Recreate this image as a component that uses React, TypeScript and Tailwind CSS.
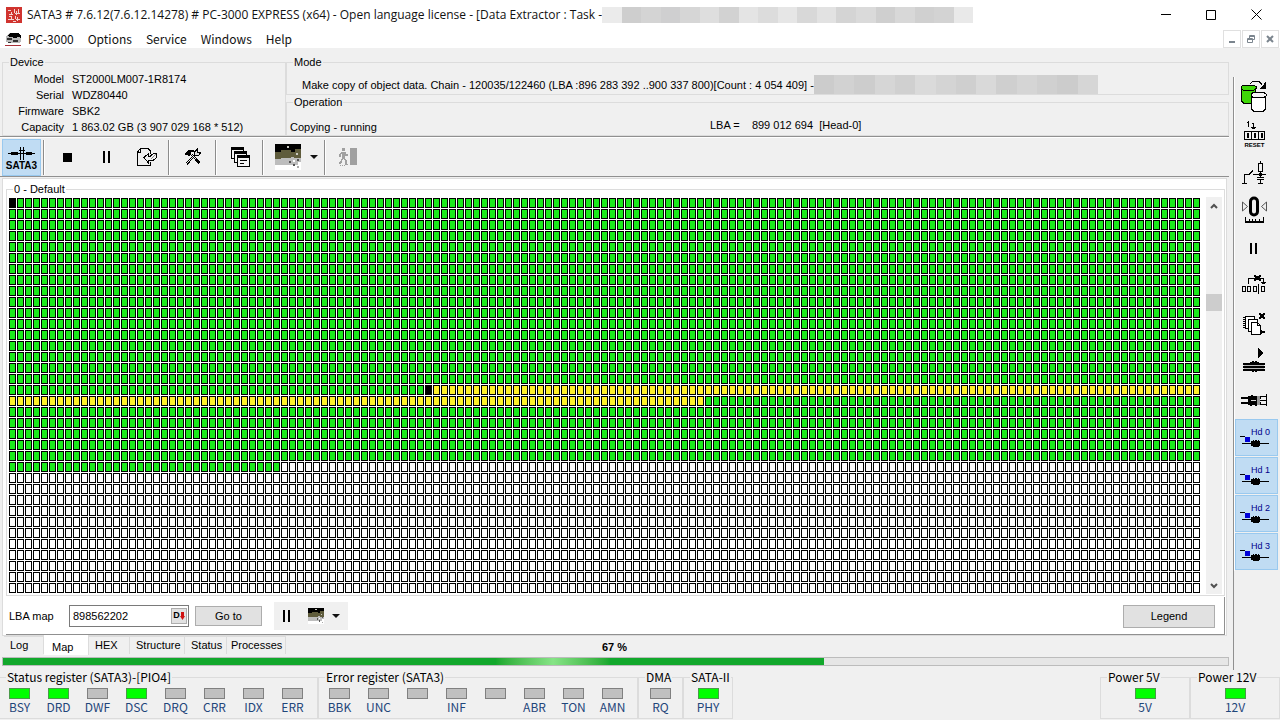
import { useState } from "react";
import type { ReactNode } from "react";
import clsx from "clsx";

const COLUMNS = 149;
const ROWS = 36;

type CellState = "done" | "active" | "marker" | "empty";

const CELL_STYLES: Record<CellState, string> = {
  done: "bg-[#1aea1a]",
  active: "bg-[#fff02a]",
  marker: "bg-black",
  empty: "bg-white",
};

const MARKER = 17 * COLUMNS + 52;
const ACTIVE_END = 18 * COLUMNS + 87;
const DONE_END = 24 * COLUMNS + 34;

function cellState(index: number): CellState {
  if (index === 0 || index === MARKER) return "marker";
  if (index > MARKER && index < ACTIVE_END) return "active";
  if (index < DONE_END) return "done";
  return "empty";
}

const CELLS = Array.from({ length: COLUMNS * ROWS }, (_, i) => cellState(i));

const DEVICE = [
  ["Model", "ST2000LM007-1R8174"],
  ["Serial", "WDZ80440"],
  ["Firmware", "SBK2"],
  ["Capacity", "1 863.02 GB (3 907 029 168 * 512)"],
];

const STATUS_REGISTER = [
  { label: "BSY", on: true },
  { label: "DRD", on: true },
  { label: "DWF", on: false },
  { label: "DSC", on: true },
  { label: "DRQ", on: false },
  { label: "CRR", on: false },
  { label: "IDX", on: false },
  { label: "ERR", on: false },
];

const ERROR_REGISTER = ["BBK", "UNC", "", "INF", "", "ABR", "TON", "AMN"].map((label) => ({
  label,
  on: false,
}));

const TABS = [
  { name: "Log", width: "w-10 pl-[6px]" },
  { name: "Map", width: "w-[45px] pl-[8px]" },
  { name: "HEX", width: "w-[41px] pl-[6px]" },
  { name: "Structure", width: "w-[55px] pl-[6px]" },
  { name: "Status", width: "w-[42px] pl-[6px]" },
  { name: "Processes", width: "w-[59px] pl-[4px]" },
];

function Group({ title, className, children }: { title: string; className?: string; children: ReactNode }) {
  return (
    <fieldset className={clsx("min-w-0 border border-[#dcdcdc]", className)}>
      <legend className="ml-[6px] h-[14px] px-px leading-[14px] whitespace-nowrap">{title}</legend>
      {children}
    </fieldset>
  );
}

function Mosaic({ colors, className }: { colors: string[]; className: string }) {
  return (
    <div className={clsx("flex", className)}>
      {colors.map((color, i) => (
        <div key={i} className={clsx("flex-1", color)} />
      ))}
    </div>
  );
}

function Led({ label, on }: { label: string; on: boolean }) {
  return (
    <div className="flex w-[39px] flex-col items-center">
      <div className={clsx("h-[11px] w-[21px] border", on ? "border-[#4a9a4a] bg-[#00ff00]" : "border-[#808080] bg-[#c0c0c0]")} />
      <span className="h-4 leading-4 text-[#1f467a]">{label}</span>
    </div>
  );
}

function Separator() {
  return <div className="h-[35px] w-[2px] border-r border-l border-r-white border-l-[#8c8c8c]" />;
}

function PauseIcon() {
  return (
    <svg width="10" height="12" viewBox="0 0 10 12" shapeRendering="crispEdges">
      <path d="M1 0h2v12H1zM6 0h2v12H6z" />
    </svg>
  );
}

function MapPicture({ size }: { size: number }) {
  return (
    <svg width={size} height={size} viewBox="0 0 26 26" shapeRendering="crispEdges">
      <rect width="26" height="26" fill="#fff" />
      <rect width="26" height="9" fill="#000" />
      <path d="M0 8h6V6h10v2h4V5h6v10H0z" fill="#5f5c3c" />
      <path d="M0 15h6v-1h10v-1h3v1h7v7H0z" fill="#bdbdbd" />
      <path d="M12 2h2v2h-2zM21 9h2v2h-2z" fill="#c8c8c0" />
      <path d="M14 17h2v2h-2zM18 20h2v2h-2zM22 15h2v2h-2z" fill="#555" />
      <path d="M23 18h3v3h-3zM18 16h2v2h-2z" fill="#fff" />
      <path d="M22 22h2v2h-2z" fill="#aaa" />
    </svg>
  );
}

function Caret() {
  return (
    <svg width="8" height="4" viewBox="0 0 8 4">
      <path d="M0 0h8L4 4z" fill="#111" />
    </svg>
  );
}

function SideSvg({ children }: { children: ReactNode }) {
  return (
    <svg width="38" height="38" viewBox="0 0 38 38" fill="none" stroke="#000" shapeRendering="crispEdges">
      {children}
    </svg>
  );
}

const SIDE_TOOLS: { name: string; icon: ReactNode }[] = [
  {
    name: "Copy drive",
    icon: (
      <>
        <path d="M6.500 10v14l2 2h10l2-2V10" fill="#3fd808" />
        <path d="M8 8.500h11l2 1v2l-2 1.500H8l-1.500-1.500v-2z" fill="#3fd808" />
        <path d="M16.500 18v14l2 2h10l2-2V18" fill="#fff" />
        <path d="M18 15.500h11l2 1.500v2l-2 1.500H18l-1.500-1.500v-2z" fill="#f4f4f4" />
        <path d="M15 6.500l3-2h6l3 3" />
        <path d="M31 4v8h-7l2-2 3-3z" fill="#000" stroke="none" />
      </>
    ),
  },
  {
    name: "Reset",
    icon: (
      <>
        <path d="M12 7.500h2M13.500 6v6M17 8.500h2M18.500 8v6M16 12.500h5M17 13.500h3" />
        <path d="M30 16.500H9.500v8H30M16.500 17v7M23.500 17v7M29.500 17v7" />
        <path d="M12.500 18.500h1v4h-1zM19.500 18.500h1v4h-1zM26.500 18.500h1v4h-1z" />
        <text x="19.500" y="32" textAnchor="middle" stroke="none" fill="#000" fontSize="6" fontWeight="700" fontFamily="Liberation Sans, sans-serif" shapeRendering="auto">
          RESET
        </text>
      </>
    ),
  },
  {
    name: "Power circuit",
    icon: (
      <>
        <path d="M25.500 8v2M23.500 10.500h4v8h-4zM25.500 18v6M18 21.500h13M22 24.500h7M22 26.500h7M25.500 27v4M23 30.500h5" />
        <path d="M24 20h3v3h-3z" fill="#000" stroke="none" />
        <path d="M7 30.500h5M9.500 30v-8.500H14l4-4" />
      </>
    ),
  },
  {
    name: "Recalibrate",
    icon: (
      <>
        <rect x="15.500" y="7" width="7" height="17" rx="3.500" strokeWidth="3" shapeRendering="auto" />
        <path d="M7.500 11v9l5-4.500zM31.500 11v9l-5-4.500z" stroke="#555" shapeRendering="auto" />
        <path d="M10 30.500h19M10 31.500h19M10.500 26v5M14.500 28v3M17.500 28v3M20.500 28v3M24.500 28v3M28.500 26v5" />
      </>
    ),
  },
  { name: "Pause", icon: <path d="M15 14h2v11h-2zM20 14h2v11h-2z" fill="#000" stroke="none" /> },
  {
    name: "Skip sectors",
    icon: (
      <>
        <path d="M7.500 19.500h3v5h-3zM12.500 19.500h3v5h-3zM18.500 19.500h3v5h-3zM23.500 17v10M26.500 19.500h3v5h-3zM13.500 17v-5.500h15V15M26 15.500h5M27 16.500h3" />
        <path d="M19 8h2v1h3V8h2v2h-1v2h1v2h-2v-1h-3v1h-2v-2h1v-2h-1z" fill="#000" stroke="none" />
      </>
    ),
  },
  {
    name: "Clear chain",
    icon: (
      <>
        <path d="M10.500 11.500h9v12h-9z" fill="#fff" />
        <path d="M8 12.500h2M8 14.500h2M8 16.500h2M8 18.500h2M8 20.500h2M8 22.500h2" />
        <path d="M13.500 14.500h9v12h-9z" fill="#fff" />
        <path d="M16.500 17.500h6l3 3v9h-9z" fill="#fff" />
        <path d="M22.500 17v3.500H26" />
        <path d="M25 25h2v1h3v2h-3v1h-2zM24 8h2v1h2V8h2v2h-1v2h1v2h-2v-1h-2v1h-2v-2h1v-2h-1z" fill="#000" stroke="none" />
      </>
    ),
  },
  {
    name: "Start heads",
    icon: (
      <>
        <path d="M23 5l6 5-6 5z" fill="#000" stroke="none" />
        <path d="M8 21h22M8 24h22M8 27h22" strokeWidth="2" />
        <path d="M15 19h2v-1h2v1h1v-1h2v1h2v9h-2v1h-2v-1h-1v1h-2v-1h-2z" fill="#000" stroke="none" />
        <path d="M9 22.500h20M9 25.500h20" stroke="#bbb" />
      </>
    ),
  },
  {
    name: "Park heads",
    icon: (
      <>
        <path d="M6 17h20M6 22h20" strokeWidth="2" />
        <path d="M13 15h3v-1h2v1h4v10h-2v-1h-3v1h-2v-1h-2z" fill="#000" stroke="none" />
        <path d="M22 15h3v9h-3z" fill="#999" stroke="none" />
        <path d="M16 19.500h5" stroke="#ddd" />
        <path d="M25 15.500h6M25 19.500h6M25 23.500h6M31.500 13v12" />
      </>
    ),
  },
];

function SideBar() {
  return (
    <aside className="mt-[29px] flex w-[47px] shrink-0 flex-col border-l border-[#909090]">
      {SIDE_TOOLS.map((tool) => (
        <button key={tool.name} type="button" aria-label={tool.name} className="h-[38px] border-l border-white">
          <SideSvg>{tool.icon}</SideSvg>
        </button>
      ))}
      {[0, 1, 2, 3].map((head) => (
        <div key={head} className="h-[38px] border-l border-white">
          <button type="button" className="relative h-[37px] w-[43px] border border-[#99c9ef] bg-[#c0dcf3]">
            <span className="absolute top-[6px] right-[7px] text-[9px] leading-3 text-[#00008b]">Hd {head}</span>
            <svg width="41" height="35" viewBox="1 1 41 35" shapeRendering="crispEdges">
              <path d="M5 17h5v1H5z" />
              <path d="M10 18h5v5h-5z" fill="#0000d8" />
              <path d="M7 24h27v1H7z" />
              <path d="M16 22h2v-1h1v1h1v-1h2v1h1v-1h1v1h1v5h-1v1h-6v-1h-2z" />
            </svg>
          </button>
        </div>
      ))}
    </aside>
  );
}

function TitleBar() {
  return (
    <header className="bg-white font-['Noto_Sans_CJK_KR',sans-serif] text-[12px] text-[#111]">
      <div className="flex h-[29px] items-center pl-[6px]">
        <svg width="16" height="16" viewBox="0 0 16 16" shapeRendering="crispEdges">
          <rect width="16" height="16" fill="#d0342f" />
          <path d="M2 3h3v1H2zM5 5h1v2H5zM3 7h4v1H3zM8 2h1v4H8zM10 4h1v4h-1zM12 2h1v5h-1zM9 6h5v1H9zM3 9h3v1H3zM5 10h1v3H5zM2 12h6v1H2zM9 9h1v3H9zM11 10h1v4h-1zM10 12h4v1h-4zM7 14h3v1H7z" fill="#f4d4d2" />
        </svg>
        <h1 className="ml-[5px] font-['Open_Sans',sans-serif] leading-4 whitespace-nowrap">
          SATA3 # 7.6.12(7.6.12.14278) # PC-3000 EXPRESS (x64) - Open language license - [Data Extractor : Task -
        </h1>
        <Mosaic
          className="h-4 w-[371px]"
          colors={[
            "bg-[#ebebeb]", "bg-[#cecece]", "bg-[#d4d4d4]", "bg-[#cfcfd0]", "bg-[#d6d6d6]", "bg-[#dedede]",
            "bg-[#d2d2d2]", "bg-[#e4e4e4]", "bg-[#dcdcdc]", "bg-[#e6e6e6]", "bg-[#d8d8d8]", "bg-[#e2e2e2]",
            "bg-[#d4d4d4]", "bg-[#dadada]", "bg-[#cfcfcf]", "bg-[#d8d8d8]", "bg-[#d0d0d0]", "bg-[#d3d3d3]", "bg-[#e9e9e9]",
          ]}
        />
        <div className="ml-auto flex">
          <button type="button" aria-label="Minimize" className="flex h-[28px] w-[46px] items-center justify-center">
            <svg width="11" height="11" viewBox="0 0 11 11"><path d="M0 5.500h10" stroke="#000" /></svg>
          </button>
          <button type="button" aria-label="Maximize" className="flex h-[28px] w-11 items-center justify-center">
            <svg width="10" height="10" viewBox="0 0 10 10"><path d="M.5.500h9v9h-9z" fill="none" stroke="#000" /></svg>
          </button>
          <button type="button" aria-label="Close" className="flex h-[28px] w-[47px] items-center justify-center">
            <svg width="11" height="11" viewBox="0 0 11 11"><path d="M.5.500l10 10M10.500.500l-10 10" stroke="#000" /></svg>
          </button>
        </div>
      </div>
      <div className="flex h-[19px] items-center pl-[5px]">
        <svg width="16" height="16" viewBox="0 0 16 16" shapeRendering="crispEdges">
          <path d="M1 5l4-3h8l3 2v6l-2 2H4l-3-1z" fill="#b8b8b8" />
          <path d="M5 2h8l3 2v3l-3-1-3 1-5-1-3-1z" />
          <path d="M2 7h5v2H2zM8 9h5v2H8zM3 11h3v1H3z" fill="#333" />
          <path d="M0 14h16v1H0z" fill="#a83038" />
        </svg>
        <nav className="ml-[7px] flex gap-[14px]">
          {["PC-3000", "Options", "Service", "Windows", "Help"].map((item) => (
            <button key={item} type="button" className="leading-4">
              {item}
            </button>
          ))}
        </nav>
        <div className="mr-px ml-auto flex gap-px">
          <button type="button" aria-label="Minimize window" className="flex h-[18px] w-[18px] items-center justify-center border border-[#e0e0e0]">
            <svg width="8" height="8" viewBox="0 0 8 8"><path d="M1 6h6v2H1z" fill="#7b858e" /></svg>
          </button>
          <button type="button" aria-label="Restore window" className="flex h-[18px] w-[18px] items-center justify-center border border-[#e0e0e0]">
            <svg width="8" height="8" viewBox="0 0 8 8" fill="none" stroke="#7b858e"><path d="M.5 3.500h5v4h-5zM0 4.500h6M2.500 3V.500h5v4H6M2 1.500h6" /></svg>
          </button>
          <button type="button" aria-label="Close window" className="flex h-[18px] w-[18px] items-center justify-center border border-[#e0e0e0]">
            <svg width="8" height="8" viewBox="0 0 8 8"><path d="M1 1l6 6M7 1L1 7" stroke="#7b858e" strokeWidth="2" /></svg>
          </button>
        </div>
      </div>
    </header>
  );
}

function InfoPanel() {
  return (
    <div className="flex pt-[7px] pl-[2px]">
      <Group title="Device" className="w-[284px] shrink-0">
        <dl className="grid grid-cols-[61px_1fr] gap-x-2 pt-[2px] leading-4">
          {DEVICE.map(([label, value]) => (
            <div key={label} className="contents">
              <dt className="text-right">{label}</dt>
              <dd className="whitespace-nowrap">{value}</dd>
            </div>
          ))}
        </dl>
      </Group>
      <div className="flex min-w-0 flex-1 flex-col">
        <Group title="Mode" className="h-10">
          <div className="flex items-center pl-[15px]">
            <span className="mt-[6px] leading-4 whitespace-nowrap">
              Make copy of object data. Chain - 120035/122460 (LBA :896 283 392 ..900 337 800)[Count : 4 054 409] -
            </span>
            <Mosaic
              className="mt-[6px] h-[19px] w-[284px]"
              colors={[
                "bg-[#cccccc]", "bg-[#d2d2d2]", "bg-[#cdcdcd]", "bg-[#d6d6d6]", "bg-[#d0d0d0]", "bg-[#dadada]", "bg-[#d4d4d4]",
                "bg-[#cfcfcf]", "bg-[#d9d9d9]", "bg-[#cfcfcf]", "bg-[#d5d5d5]", "bg-[#d0d0d0]", "bg-[#cccccc]", "bg-[#d6d6d6]",
              ]}
            />
          </div>
        </Group>
        <Group title="Operation" className="flex-1">
          <div className="grid grid-cols-[420px_1fr] pt-[8px] pl-[3px] leading-4">
            <span className="pt-[2px]">Copying - running</span>
            <span className="whitespace-pre">LBA =    899 012 694  [Head-0]</span>
          </div>
        </Group>
      </div>
    </div>
  );
}

function ToolBar() {
  return (
    <div className="border-t border-[#909090]">
      <div className="flex h-10 items-center border-t border-b border-t-white border-b-[#909090] pl-[2px]">
        <button type="button" className="flex h-[37px] w-[39px] flex-col items-center border border-[#99c9ef] bg-[#c0dcf3] pt-[7px]">
          <svg width="27" height="13" viewBox="0 0 27 13" className="shrink-0" shapeRendering="crispEdges">
            <path d="M0 6h27v1H0zM3 5h7v3H3zM18 5h6v3h-6zM12 0h1v13h-1zM15 0h1v13h-1zM11 3h6v1h-6z" />
          </svg>
          <span className="text-[10px] leading-3 font-bold">SATA3</span>
        </button>
        <div className="ml-[2px] flex items-center">
          <Separator />
          <button type="button" aria-label="Stop" className="flex h-9 w-11 items-center justify-center">
            <span className="h-[9px] w-[9px] bg-black" />
          </button>
          <button type="button" aria-label="Pause" className="flex h-9 w-[35px] items-center justify-center">
            <PauseIcon />
          </button>
          <button type="button" aria-label="Export" className="flex h-9 w-11 items-center justify-center pl-[2px]">
            <svg width="22" height="20" viewBox="0 0 22 20" fill="none" stroke="#000" shapeRendering="crispEdges">
              <path d="M14.500 7V4l-2.500-2.500H4.500L1.500 5v13.500h13V15M4.500 2v3H2" />
              <path d="M8 10.500L12.500 6.500V9h2l3-2.500h3v4L17 13.500h-4.500V16z" fill="#f0f0f0" />
              <path d="M15 12l5-5" stroke="#888" />
            </svg>
          </button>
          <Separator />
          <button type="button" aria-label="Tools" className="flex h-9 w-[45px] items-center justify-center">
            <svg width="18" height="18" viewBox="0 0 18 18" fill="none" stroke="#000" shapeRendering="crispEdges">
              <path d="M1 6l4-4h4v1.500H7L5 7.500 3.500 6.500z" fill="#000" />
              <path d="M6 6l9 9.500M8 6l8 8.500M11 8L3 16.500M9 8L2 15" />
              <path d="M10.500 7.500V4l3-3v3h3.500l-2.500 3.500z" fill="#ddd" />
            </svg>
          </button>
          <Separator />
          <button type="button" aria-label="Windows" className="flex h-9 w-[45px] items-center justify-center pl-[3px]">
            <svg width="20" height="21" viewBox="0 0 20 21" stroke="#000" fill="#f4f4f4" shapeRendering="crispEdges">
              <path d="M.5.500h12v11H.5z" />
              <path d="M.5 2.500h12" />
              <path d="M3.500 4.500h12v11h-12z" />
              <path d="M3.500 6.500h12" />
              <path d="M6.500 8.500h12v11h-12z" />
              <path d="M6.500 10.500h12M9 13.500h7M9 16.500h4M1 1.500h11M4 5.500h11M7 9.500h11" />
            </svg>
          </button>
          <Separator />
          <button type="button" aria-label="Map view" className="flex h-9 w-[60px] items-start gap-[9px] pt-[5px] pl-[11px]">
            <MapPicture size={26} />
            <span className="flex h-[26px] items-center">
              <Caret />
            </span>
          </button>
          <Separator />
          <button type="button" aria-label="Exit" className="flex h-9 w-11 items-center justify-center">
            <svg width="18" height="18" viewBox="0 0 18 18" fill="#a0a0a0" shapeRendering="crispEdges">
              <path d="M3 0h3v3H3zM2 4h5v2h2v2H6v3l2 2v3h1v1H6v-4l-2-2-1 3-2 2H0v-2h1l2-4V6H2v3H0V6z" />
              <path d="M11 0h7v17h-7zM1 17h1v1H1zM3 17h1v1H3zM5 17h1v1H5z" />
            </svg>
          </button>
        </div>
      </div>
    </div>
  );
}

function SectorMap() {
  return (
    <Group title="0 - Default" className="mr-px ml-[3px] pb-px">
      <div className="flex justify-between pr-[2px]">
        <div className="grid min-w-0 flex-1 grid-cols-[repeat(auto-fill,7px)] gap-px px-[2px] pt-[2px] pb-px">
          {CELLS.map((state, i) => (
            <div key={i} className={clsx("h-[10px] border border-black", CELL_STYLES[state])} />
          ))}
        </div>
        <div className="mt-px flex w-4 flex-col items-center bg-[#f0f0f0]">
          <button type="button" aria-label="Scroll up" className="flex h-[17px] items-center">
            <svg width="8" height="6" viewBox="0 0 8 6"><path d="M1 5l3-3 3 3" fill="none" stroke="#505050" strokeWidth="2" /></svg>
          </button>
          <div className="flex w-full flex-1 flex-col">
            <div className="grow-[80]" />
            <div className="h-[17px] bg-[#cdcdcd]" />
            <div className="grow-[268]" />
          </div>
          <button type="button" aria-label="Scroll down" className="flex h-[17px] items-center">
            <svg width="8" height="6" viewBox="0 0 8 6"><path d="M1 1l3 3 3-3" fill="none" stroke="#505050" strokeWidth="2" /></svg>
          </button>
        </div>
      </div>
    </Group>
  );
}

function MapControls() {
  const [lba, setLba] = useState("898562202");

  return (
    <div className="mt-px mr-px ml-[3px] flex h-[38px] items-center border-r border-b border-[#909090] pt-px pr-[9px] pl-[3px]">
      <label htmlFor="lba" className="w-[60px]">
        LBA map
      </label>
      <div className="flex h-[22px] w-[120px] items-center border border-[#7a7a7a] bg-white pr-px">
        <input id="lba" value={lba} onChange={(e) => setLba(e.target.value)} className="min-w-0 flex-1 pl-[3px] leading-4 outline-none" />
        <button type="button" aria-label="Decimal" className="flex h-[16px] w-4 items-center justify-center border border-[#adadad] bg-[#e1e1e1] text-[9px] font-bold">
          D
          <svg width="5" height="8" viewBox="0 0 5 8"><path d="M1 0h3v4h1L2.500 8 0 4h1z" fill="#d01010" /></svg>
        </button>
      </div>
      <button type="button" className="ml-[6px] h-[20px] w-[67px] border border-[#adadad] bg-[#e1e1e1]">
        Go to
      </button>
      <div className="ml-3 flex h-[28px] w-[74px] items-center bg-[#f0f0f0] pl-2">
        <button type="button" aria-label="Pause map">
          <PauseIcon />
        </button>
        <button type="button" aria-label="Map picture" className="ml-4 flex items-center gap-2">
          <MapPicture size={16} />
          <Caret />
        </button>
      </div>
      <button type="button" className="ml-auto h-[23px] w-[92px] border border-[#adadad] bg-[#e1e1e1]">
        Legend
      </button>
    </div>
  );
}

function TabRow() {
  const [active, setActive] = useState("Map");

  return (
    <div className="grid h-[21px] grid-cols-[1fr_auto_1fr] items-start">
      <div role="tablist" className="flex pl-1">
        {TABS.map((tab) => (
          <button
            key={tab.name}
            type="button"
            role="tab"
            aria-selected={active === tab.name}
            onClick={() => setActive(tab.name)}
            className={clsx(
              "border-r border-[#dcdcdc] text-left",
              tab.width,
              active === tab.name ? "-mt-px h-5 bg-white pt-1" : "h-[18px] border-t"
            )}
          >
            {tab.name}
          </button>
        ))}
      </div>
      <span className="pt-[3px] leading-4 font-bold">67 %</span>
    </div>
  );
}

function StatusBar() {
  return (
    <footer className="flex pb-px font-['Noto_Sans_CJK_KR',sans-serif] text-[12px]">
      <Group title="Status register (SATA3)-[PIO4]" className="-ml-px w-[319px] pb-[3px]">
        <div className="flex pt-1">
          {STATUS_REGISTER.map((led) => (
            <Led key={led.label} {...led} />
          ))}
        </div>
      </Group>
      <Group title="Error register (SATA3)" className="w-[320px]">
        <div className="flex pt-1 pl-px">
          {ERROR_REGISTER.map((led, i) => (
            <Led key={i} {...led} />
          ))}
        </div>
      </Group>
      <Group title="DMA" className="w-[45px]">
        <div className="flex justify-center pt-1">
          <Led label="RQ" on={false} />
        </div>
      </Group>
      <Group title="SATA-II" className="w-[50px]">
        <div className="flex justify-center pt-1">
          <Led label="PHY" on />
        </div>
      </Group>
      <Group title="Power 5V" className="ml-auto w-[90px]">
        <div className="flex justify-center pt-1">
          <Led label="5V" on />
        </div>
      </Group>
      <Group title="Power 12V" className="w-[90px]">
        <div className="flex justify-center pt-1">
          <Led label="12V" on />
        </div>
      </Group>
    </footer>
  );
}

export default function App() {
  return (
    <div className="flex min-h-screen flex-col bg-[#f0f0f0] font-['Liberation_Sans',Arial,sans-serif] text-[11px] text-black">
      <TitleBar />
      <div className="flex flex-1">
        <main className="mr-[4px] flex min-w-0 flex-1 flex-col">
          <InfoPanel />
          <ToolBar />
          <div className="mt-px mr-[2px] ml-[2px] border border-[#dcdcdc] bg-white pt-[3px]">
            <SectorMap />
            <MapControls />
          </div>
          <TabRow />
          <div role="progressbar" aria-valuenow={67} aria-label="Progress" className="ml-[2px] h-[9px] border border-[#bcbcbc] bg-[#e6e6e6]">
            <div className="h-full w-[67%] bg-linear-to-r from-[#12a82c] from-60% via-[#86e486] via-67% to-[#12a82c] to-74%" />
          </div>
        </main>
        <SideBar />
      </div>
      <StatusBar />
    </div>
  );
}
